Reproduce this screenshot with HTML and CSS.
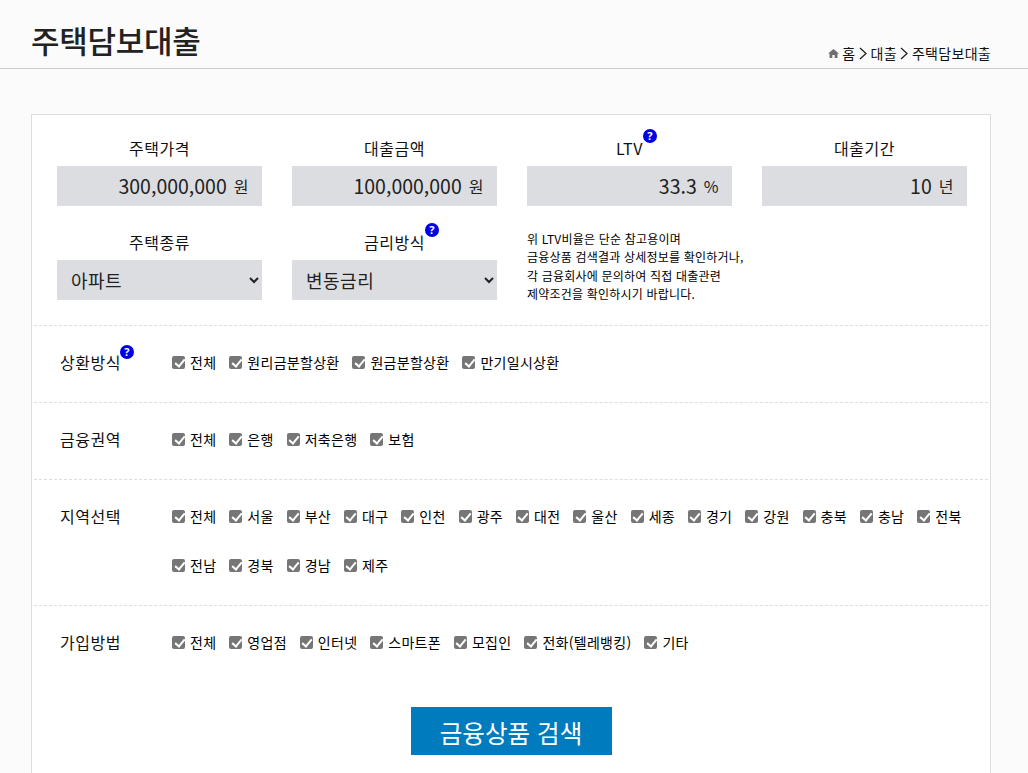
FILE: index.html
```html
<!DOCTYPE html>
<html lang="ko">
<head>
<meta charset="utf-8">
<title>주택담보대출</title>
<link rel="stylesheet" href="styles.css">
</head>
<body>
<header class="page-head">
  <h1 class="page-title">주택담보대출</h1>
  <nav class="crumbs">
    <svg class="home" viewBox="0 0 12 10" width="11" height="9"><path d="M6 0 L12 5 L10.4 5 L10.4 10 L7.3 10 L7.3 6.8 L4.7 6.8 L4.7 10 L1.6 10 L1.6 5 L0 5 Z" fill="#6f6f6f"/></svg>
    <span>홈</span>
    <svg class="chev" viewBox="0 0 8 13" width="8" height="13"><path d="M1 1 L7 6.5 L1 12" fill="none" stroke="#222" stroke-width="1.3"/></svg>
    <span>대출</span>
    <svg class="chev" viewBox="0 0 8 13" width="8" height="13"><path d="M1 1 L7 6.5 L1 12" fill="none" stroke="#222" stroke-width="1.3"/></svg>
    <span>주택담보대출</span>
  </nav>
</header>
<main class="panel">
  <section class="fields">
    <div class="field">
      <div class="field-label"><span class="lbl">주택가격</span></div>
      <div class="value"><span class="num">300,000,000</span><span class="unit">원</span></div>
    </div>
    <div class="field">
      <div class="field-label"><span class="lbl">대출금액</span></div>
      <div class="value"><span class="num">100,000,000</span><span class="unit">원</span></div>
    </div>
    <div class="field">
      <div class="field-label"><span class="lbl">LTV<i class="help">?</i></span></div>
      <div class="value"><span class="num">33.3</span><span class="unit">%</span></div>
    </div>
    <div class="field">
      <div class="field-label"><span class="lbl">대출기간</span></div>
      <div class="value"><span class="num">10</span><span class="unit">년</span></div>
    </div>
    <div class="field">
      <div class="field-label"><span class="lbl">주택종류</span></div>
      <select class="pick"><option>아파트</option></select>
    </div>
    <div class="field">
      <div class="field-label"><span class="lbl">금리방식<i class="help">?</i></span></div>
      <select class="pick"><option>변동금리</option></select>
    </div>
    <p class="note">위 LTV비율은 단순 참고용이며<br>금융상품 검색결과 상세정보를 확인하거나,<br>각 금융회사에 문의하여 직접 대출관련<br>제약조건을 확인하시기 바랍니다.</p>
  </section>

  <section class="opt">
    <div class="opt-name"><span class="lbl">상환방식<i class="help">?</i></span></div>
    <div class="checks">
      <label class="chk"><input type="checkbox" checked>전체</label>
      <label class="chk"><input type="checkbox" checked>원리금분할상환</label>
      <label class="chk"><input type="checkbox" checked>원금분할상환</label>
      <label class="chk"><input type="checkbox" checked>만기일시상환</label>
    </div>
  </section>

  <section class="opt">
    <div class="opt-name">금융권역</div>
    <div class="checks">
      <label class="chk"><input type="checkbox" checked>전체</label>
      <label class="chk"><input type="checkbox" checked>은행</label>
      <label class="chk"><input type="checkbox" checked>저축은행</label>
      <label class="chk"><input type="checkbox" checked>보험</label>
    </div>
  </section>

  <section class="opt">
    <div class="opt-name">지역선택</div>
    <div class="checks">
      <label class="chk"><input type="checkbox" checked>전체</label>
      <label class="chk"><input type="checkbox" checked>서울</label>
      <label class="chk"><input type="checkbox" checked>부산</label>
      <label class="chk"><input type="checkbox" checked>대구</label>
      <label class="chk"><input type="checkbox" checked>인천</label>
      <label class="chk"><input type="checkbox" checked>광주</label>
      <label class="chk"><input type="checkbox" checked>대전</label>
      <label class="chk"><input type="checkbox" checked>울산</label>
      <label class="chk"><input type="checkbox" checked>세종</label>
      <label class="chk"><input type="checkbox" checked>경기</label>
      <label class="chk"><input type="checkbox" checked>강원</label>
      <label class="chk"><input type="checkbox" checked>충북</label>
      <label class="chk"><input type="checkbox" checked>충남</label>
      <label class="chk"><input type="checkbox" checked>전북</label>
      <label class="chk"><input type="checkbox" checked>전남</label>
      <label class="chk"><input type="checkbox" checked>경북</label>
      <label class="chk"><input type="checkbox" checked>경남</label>
      <label class="chk"><input type="checkbox" checked>제주</label>
    </div>
  </section>

  <section class="opt opt-last">
    <div class="opt-name">가입방법</div>
    <div class="checks">
      <label class="chk"><input type="checkbox" checked>전체</label>
      <label class="chk"><input type="checkbox" checked>영업점</label>
      <label class="chk"><input type="checkbox" checked>인터넷</label>
      <label class="chk"><input type="checkbox" checked>스마트폰</label>
      <label class="chk"><input type="checkbox" checked>모집인</label>
      <label class="chk"><input type="checkbox" checked>전화(텔레뱅킹)</label>
      <label class="chk"><input type="checkbox" checked>기타</label>
    </div>
  </section>

  <div class="actions"><button class="search" type="button">금융상품 검색</button></div>
</main>
</body>
</html>
```
FILE: styles.css
```css
* { box-sizing: border-box; }
html, body { margin: 0; padding: 0; }
body {
  height: 773px;
  overflow: hidden;
  background: #fbfbfb;
  color: #222;
  font-family: "Noto Sans CJK KR", "Noto Sans", sans-serif;
}
.page-head {
  height: 69px;
  border-bottom: 1px solid #ccc;
  padding: 0 37px 0 31px;
  display: flex;
  justify-content: space-between;
  align-items: flex-end;
}
.page-title {
  margin: 0 0 7px;
  font-size: 31px;
  line-height: 42px;
  font-weight: 500;
  color: #222;
  letter-spacing: -.25px;
}
.crumbs {
  display: flex;
  align-items: center;
  gap: 3.5px;
  font-size: 14px;
  line-height: 20px;
  margin-bottom: 5px;
  letter-spacing: .3px;
  color: #111;
}
.panel {
  margin: 45px 37px 0 31px;
  background: #fff;
  border: 1px solid #ddd;
  padding: 0 0 60px;
}
.fields {
  display: grid;
  grid-template-columns: repeat(4, 205px);
  column-gap: 30px;
  padding: 20px 0 0 23px;
  margin: 0 2px;
  height: 211px;
  border-bottom: 1px dashed #ddd;
  grid-template-rows: 74px 74px;
  row-gap: 20px;
}
.field-label {
  height: 31px;
  text-align: center;
  font-size: 16px;
  line-height: 26px;
  color: #111;
}
.lbl { position: relative; display: inline-block; letter-spacing: .5px; }
.help {
  position: absolute;
  left: 100%;
  top: -6px;
  width: 14px;
  height: 14px;
  border-radius: 50%;
  background: #0000e6;
  color: #fff;
  font: bold 11px/14px "Noto Sans", sans-serif;
  text-align: center;
  letter-spacing: 0;
}
.opt-name .help { top: -5px; margin-left: -1px; }
.value {
  height: 40px;
  background: #dcdde1;
  display: flex;
  justify-content: flex-end;
  align-items: center;
  gap: 7px;
  padding-right: 13.5px;
}
.num { font-size: 19.5px; line-height: 40px; }
.unit { font-size: 16px; line-height: 40px; }
.pick {
  width: 205px;
  height: 40px;
  border: 0;
  border-radius: 0;
  background-color: #dcdde1;
  color: #222;
  padding-left: 10px;
  font-family: inherit;
  font-size: 18px;
  letter-spacing: .5px;
}
.note {
  margin: 1px 0 0;
  font-size: 12px;
  line-height: 18.4px;
  white-space: nowrap;
  letter-spacing: .2px;
  color: #000;
}
.opt {
  display: flex;
  margin: 0 2px;
  border-bottom: 1px dashed #ddd;
  padding: 24px 0 28px 26px;
}
.opt-last { border-bottom: 0; }
.opt-name {
  flex: 0 0 112px;
  font-size: 16px;
  line-height: 24px;
  letter-spacing: .5px;
  color: #111;
}
.checks {
  flex: 1;
  display: flex;
  flex-wrap: wrap;
  column-gap: 13px;
  row-gap: 25px;
  padding-right: 20px;
}
.chk {
  display: flex;
  align-items: center;
  font-size: 14px;
  line-height: 24px;
  white-space: nowrap;
  letter-spacing: .28px;
  color: #000;
}
.chk input {
  appearance: none;
  position: relative;
  margin: 0 5px 0 0;
  width: 13px;
  height: 13px;
  border-radius: 2px;
  background: #767676;
}
.chk input::after {
  content: "";
  position: absolute;
  left: 4.5px;
  top: 1.5px;
  width: 4px;
  height: 8px;
  border: solid #fff;
  border-width: 0 2px 2px 0;
  transform: rotate(40deg);
}
.actions {
  display: flex;
  justify-content: center;
  padding-top: 25px;
}
.search {
  width: 201px;
  height: 48px;
  border: 0;
  background: #007bbd;
  color: #fff;
  font-family: inherit;
  font-size: 24.6px;
  line-height: 48px;
}
```
